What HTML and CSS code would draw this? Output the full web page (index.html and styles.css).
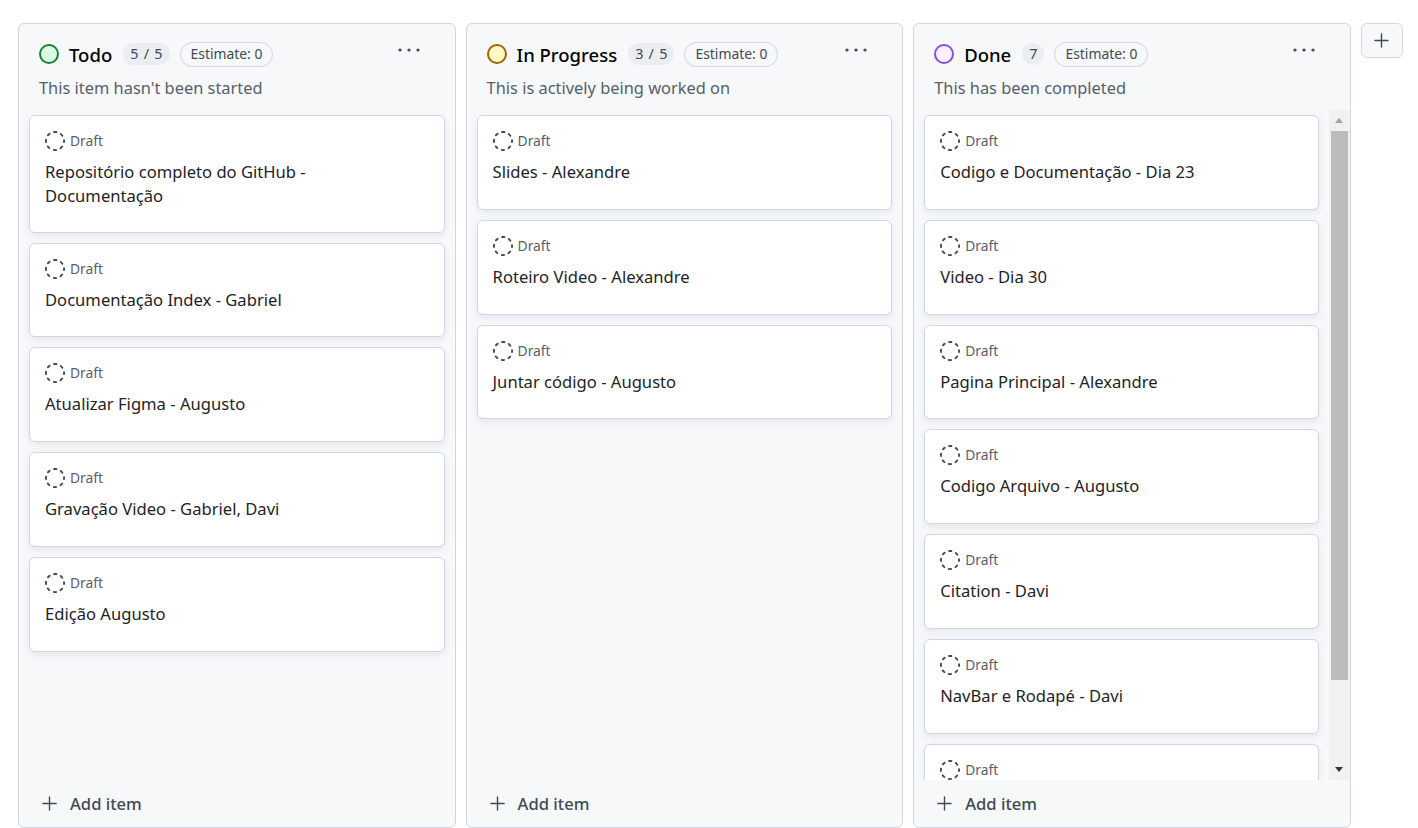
FILE: index.html
```html
<!DOCTYPE html>
<html lang="en">
<head>
    <meta charset="UTF-8">
    <meta name="viewport" content="width=device-width, initial-scale=1.0">
    <title>Board</title>
    <link rel="stylesheet" href="styles.css">
</head>
<body>
    <svg class="defs" width="0" height="0">
        <symbol id="draft" viewBox="0 0 16 16">
            <circle cx="8" cy="8" r="7.25" fill="none" stroke="#424a53" stroke-width="1.5" stroke-linecap="round" stroke-dasharray="1.9 3.79" stroke-dashoffset="0.95"/>
        </symbol>
        <symbol id="plus" viewBox="0 0 16 16">
            <path d="M8 1v14M1 8h14" fill="none" stroke="#424a53" stroke-width="1.5" stroke-linecap="round"/>
        </symbol>
        <symbol id="dots" viewBox="0 0 22 4">
            <circle cx="2" cy="2" r="1.6" fill="#424a53"/>
            <circle cx="11" cy="2" r="1.6" fill="#424a53"/>
            <circle cx="20" cy="2" r="1.6" fill="#424a53"/>
        </symbol>
    </svg>

    <div class="board">
        <section class="column">
            <header class="col-header">
                <div class="col-top">
                    <span class="status status-todo"></span>
                    <h2>Todo</h2>
                    <span class="count">5 / 5</span>
                    <span class="estimate">Estimate: 0</span>
                    <svg class="dots"><use href="#dots"/></svg>
                </div>
                <p class="col-desc">This item hasn't been started</p>
            </header>
            <div class="col-body">
                <div class="cards">
                    <article class="card card-tall">
                        <div class="draft"><svg class="draft-icon"><use href="#draft"/></svg>Draft</div>
                        <div class="card-title">Repositório completo do GitHub - Documentação</div>
                    </article>
                    <article class="card">
                        <div class="draft"><svg class="draft-icon"><use href="#draft"/></svg>Draft</div>
                        <div class="card-title">Documentação Index - Gabriel</div>
                    </article>
                    <article class="card">
                        <div class="draft"><svg class="draft-icon"><use href="#draft"/></svg>Draft</div>
                        <div class="card-title">Atualizar Figma - Augusto</div>
                    </article>
                    <article class="card">
                        <div class="draft"><svg class="draft-icon"><use href="#draft"/></svg>Draft</div>
                        <div class="card-title">Gravação Video - Gabriel, Davi</div>
                    </article>
                    <article class="card">
                        <div class="draft"><svg class="draft-icon"><use href="#draft"/></svg>Draft</div>
                        <div class="card-title">Edição Augusto</div>
                    </article>
                </div>
            </div>
            <footer class="col-footer"><svg class="plus-icon"><use href="#plus"/></svg>Add item</footer>
        </section>

        <section class="column">
            <header class="col-header">
                <div class="col-top">
                    <span class="status status-progress"></span>
                    <h2>In Progress</h2>
                    <span class="count">3 / 5</span>
                    <span class="estimate">Estimate: 0</span>
                    <svg class="dots"><use href="#dots"/></svg>
                </div>
                <p class="col-desc">This is actively being worked on</p>
            </header>
            <div class="col-body">
                <div class="cards">
                    <article class="card">
                        <div class="draft"><svg class="draft-icon"><use href="#draft"/></svg>Draft</div>
                        <div class="card-title">Slides - Alexandre</div>
                    </article>
                    <article class="card">
                        <div class="draft"><svg class="draft-icon"><use href="#draft"/></svg>Draft</div>
                        <div class="card-title">Roteiro Video - Alexandre</div>
                    </article>
                    <article class="card">
                        <div class="draft"><svg class="draft-icon"><use href="#draft"/></svg>Draft</div>
                        <div class="card-title">Juntar código - Augusto</div>
                    </article>
                </div>
            </div>
            <footer class="col-footer"><svg class="plus-icon"><use href="#plus"/></svg>Add item</footer>
        </section>

        <section class="column">
            <header class="col-header">
                <div class="col-top">
                    <span class="status status-done"></span>
                    <h2>Done</h2>
                    <span class="count">7</span>
                    <span class="estimate">Estimate: 0</span>
                    <svg class="dots"><use href="#dots"/></svg>
                </div>
                <p class="col-desc">This has been completed</p>
            </header>
            <div class="col-body">
                <div class="cards">
                    <article class="card">
                        <div class="draft"><svg class="draft-icon"><use href="#draft"/></svg>Draft</div>
                        <div class="card-title">Codigo e Documentação - Dia 23</div>
                    </article>
                    <article class="card">
                        <div class="draft"><svg class="draft-icon"><use href="#draft"/></svg>Draft</div>
                        <div class="card-title">Video - Dia 30</div>
                    </article>
                    <article class="card">
                        <div class="draft"><svg class="draft-icon"><use href="#draft"/></svg>Draft</div>
                        <div class="card-title">Pagina Principal - Alexandre</div>
                    </article>
                    <article class="card">
                        <div class="draft"><svg class="draft-icon"><use href="#draft"/></svg>Draft</div>
                        <div class="card-title">Codigo Arquivo - Augusto</div>
                    </article>
                    <article class="card">
                        <div class="draft"><svg class="draft-icon"><use href="#draft"/></svg>Draft</div>
                        <div class="card-title">Citation - Davi</div>
                    </article>
                    <article class="card">
                        <div class="draft"><svg class="draft-icon"><use href="#draft"/></svg>Draft</div>
                        <div class="card-title">NavBar e Rodapé - Davi</div>
                    </article>
                    <article class="card">
                        <div class="draft"><svg class="draft-icon"><use href="#draft"/></svg>Draft</div>
                    </article>
                </div>
                <div class="scrollbar">
                    <span class="arrow arrow-up"></span>
                    <span class="thumb"></span>
                    <span class="arrow arrow-down"></span>
                </div>
            </div>
            <footer class="col-footer col-footer-done"><svg class="plus-icon"><use href="#plus"/></svg>Add item</footer>
        </section>

        <button class="add-column"><svg class="add-column-icon"><use href="#plus"/></svg></button>
    </div>
</body>
</html>
```

FILE: styles.css
```css
:root {
    --surface: #f6f8fa;
    --border: #d0d7de;
    --text: #1f2328;
    --muted: #57606a;
}

html, body {
    height: 100%;
    overflow: hidden;
}

body {
    font-family: "Noto Sans", "Open Sans", sans-serif;
    margin: 0;
    background: #ffffff;
    color: var(--text);
}

.defs {
    position: absolute;
}

.board {
    display: flex;
    align-items: flex-start;
    gap: 10px;
    padding: 23px 0 0 18px;
}

.column {
    box-sizing: border-box;
    flex: 0 0 437.6px;
    height: 805px;
    display: flex;
    flex-direction: column;
    background: var(--surface);
    border: 1px solid var(--border);
    border-radius: 6px;
}

.col-header {
    flex: 0 0 86px;
    box-sizing: border-box;
    padding: 17px 35px 0 20px;
}

.col-top {
    display: flex;
    align-items: center;
    height: 26px;
}

.status {
    box-sizing: border-box;
    width: 20px;
    height: 20px;
    border-radius: 50%;
    border: 2px solid;
    margin-right: 10px;
}

.status-todo {
    background: #dafbe1;
    border-color: #1a7f37;
}

.status-progress {
    background: #fff8c5;
    border-color: #9a6700;
}

.status-done {
    background: #fbefff;
    border-color: #8250df;
}

h2 {
    margin: 2px 11px 0 0;
    font-size: 18.5px;
    line-height: 26px;
    font-weight: 500;
    color: #000000;
}

.count {
    height: 22px;
    min-width: 22px;
    box-sizing: border-box;
    padding: 0 7px;
    margin-right: 10px;
    border-radius: 11px;
    background: #eaeef2;
    font-size: 14.4px;
    line-height: 21px;
    word-spacing: 1.5px;
    text-align: center;
    color: #424a53;
}

.estimate {
    box-sizing: border-box;
    height: 25px;
    padding: 0 10px;
    border: 1px solid var(--border);
    border-radius: 13px;
    font-size: 13.9px;
    line-height: 22px;
    color: #424a53;
}

.dots {
    width: 22px;
    height: 4px;
    margin: -8px 0 0 auto;
}

.col-desc {
    margin: 9px 0 0;
    font-size: 16.4px;
    line-height: 24px;
    color: var(--muted);
}

.col-body {
    flex: 1;
    min-height: 0;
    display: flex;
    overflow: hidden;
}

.cards {
    flex: 1;
    min-width: 0;
    display: flex;
    flex-direction: column;
    gap: 10px;
    padding: 5px 10px 0;
}

.card {
    box-sizing: border-box;
    flex: 0 0 94.8px;
    padding: 15px 30px 0 15px;
    background: #ffffff;
    border: 1px solid var(--border);
    border-radius: 6px;
    box-shadow: 0 3px 6px rgba(140, 149, 159, 0.15);
}

.card-tall {
    flex-basis: 117.7px;
}

.draft {
    display: flex;
    align-items: flex-start;
    gap: 5px;
    height: 20px;
    font-size: 13.8px;
    line-height: 19px;
    color: var(--muted);
}

.draft-icon {
    width: 20px;
    height: 20px;
}

.card-title {
    margin-top: 9px;
    font-size: 16.6px;
    line-height: 24px;
    color: var(--text);
}

.scrollbar {
    flex: 0 0 21px;
    box-sizing: border-box;
    padding: 0 2px;
    display: flex;
    flex-direction: column;
    background: #f1f1f1;
}

.arrow {
    flex: 0 0 21px;
    display: flex;
    justify-content: center;
    align-items: center;
}

.arrow::before {
    content: "";
    border-left: 4.5px solid transparent;
    border-right: 4.5px solid transparent;
}

.arrow-up::before {
    border-bottom: 5px solid #a3a3a3;
}

.arrow-down::before {
    border-top: 5px solid #333333;
}

.thumb {
    flex: 0 0 549px;
    margin-bottom: auto;
    background: #bcbcbc;
}

.col-footer {
    flex: 0 0 46px;
    box-sizing: border-box;
    display: flex;
    align-items: center;
    gap: 13px;
    padding: 0 0 2px 23px;
    font-size: 16.6px;
    font-weight: 500;
    color: #424a53;
}

.col-footer-done {
    flex-basis: 47px;
    padding-bottom: 0;
}

.plus-icon {
    width: 15px;
    height: 15px;
}

.add-column {
    box-sizing: border-box;
    width: 42px;
    height: 35px;
    padding: 0;
    display: flex;
    align-items: center;
    justify-content: center;
    background: var(--surface);
    border: 1px solid var(--border);
    border-radius: 6px;
}

.add-column-icon {
    width: 15px;
    height: 15px;
}
```
